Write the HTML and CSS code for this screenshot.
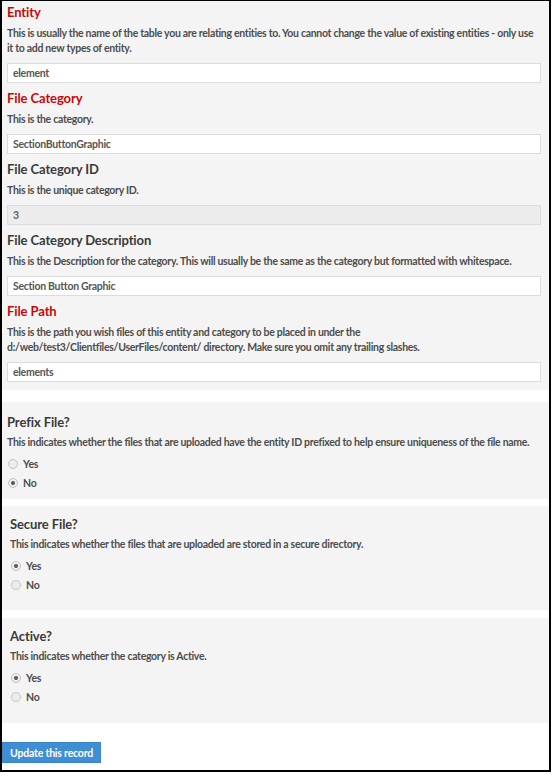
FILE: index.html
```html
<!DOCTYPE html>
<html lang="en">
<head>
<meta charset="UTF-8">
<title>Edit File Category</title>
<link rel="stylesheet" href="styles.css">
</head>
<body>
    <div class="frame">
        <div class="panel fields">
            <div class="field">
                <label class="field-title required" for="entity">Entity</label>
                <p class="field-help">This is usually the name of the table you are relating entities to. You cannot change the value of existing entities - only use it to add new types of entity.</p>
                <input type="text" id="entity" value="element">
            </div>
            <div class="field">
                <label class="field-title required" for="category">File Category</label>
                <p class="field-help">This is the category.</p>
                <input type="text" id="category" value="SectionButtonGraphic">
            </div>
            <div class="field">
                <label class="field-title" for="categoryId">File Category ID</label>
                <p class="field-help">This is the unique category ID.</p>
                <input type="text" id="categoryId" value="3" disabled>
            </div>
            <div class="field">
                <label class="field-title" for="description">File Category Description</label>
                <p class="field-help">This is the Description for the category. This will usually be the same as the category but formatted with whitespace.</p>
                <input type="text" id="description" value="Section Button Graphic">
            </div>
            <div class="field">
                <label class="field-title required" for="path">File Path</label>
                <p class="field-help">This is the path you wish files of this entity and category to be placed in under the d:/web/test3/Clientfiles/UserFiles/content/ directory. Make sure you omit any trailing slashes.</p>
                <input type="text" id="path" value="elements">
            </div>
        </div>

        <div class="panel option prefix">
            <div class="field-title">Prefix File?</div>
            <p class="field-help">This indicates whether the files that are uploaded have the entity ID prefixed to help ensure uniqueness of the file name.</p>
            <label class="radio"><input type="radio" name="prefix" value="1"> Yes</label>
            <label class="radio"><input type="radio" name="prefix" value="0" checked> No</label>
        </div>

        <div class="panel option secure">
            <div class="field-title">Secure File?</div>
            <p class="field-help">This indicates whether the files that are uploaded are stored in a secure directory.</p>
            <label class="radio"><input type="radio" name="secure" value="1" checked> Yes</label>
            <label class="radio"><input type="radio" name="secure" value="0"> No</label>
        </div>

        <div class="panel option active">
            <div class="field-title">Active?</div>
            <p class="field-help">This indicates whether the category is Active.</p>
            <label class="radio"><input type="radio" name="active" value="1" checked> Yes</label>
            <label class="radio"><input type="radio" name="active" value="0"> No</label>
        </div>

        <button class="btn-update">Update this record</button>
    </div>
</body>
</html>
```

FILE: styles.css
```css
* {
    box-sizing: border-box;
}
body {
    margin: 0;
    font-family: Lato, "Open Sans", sans-serif;
    color: #4a4a4a;
    background-color: #fff;
}
.frame {
    width: 551px;
    height: 772px;
    border: 2px solid #000;
    border-top-width: 1px;
    background-color: #fff;
}
.panel {
    background-color: #f4f4f4;
}
.fields {
    padding: 2px 8px 8px 5px;
}
.field {
    margin-top: 6px;
}
.field:first-child {
    margin-top: 0;
}
.field-title {
    display: block;
    font-size: 13px;
    line-height: 18px;
    font-weight: bold;
    letter-spacing: -0.1px;
    color: #3a3a3a;
}
.field-title.required {
    color: #c80808;
}
.field-help {
    margin: 5px 0 0;
    font-size: 10.5px;
    line-height: 15px;
    font-weight: bold;
    letter-spacing: -0.3px;
    color: #4d4d4d;
}
.field input[type="text"] {
    display: block;
    width: 100%;
    height: 20px;
    margin-top: 7px;
    padding: 0 5px;
    font-family: inherit;
    font-size: 10.5px;
    font-weight: bold;
    letter-spacing: -0.3px;
    color: #555;
    background-color: #fff;
    border: 1px solid #dcdcdc;
    outline: none;
}
.field input[disabled] {
    background-color: #ececec;
    color: #666;
}
.option {
    padding-left: 5px;
    padding-right: 5px;
}
.option .field-help {
    margin-top: 4px;
}
.prefix {
    margin-top: 12px;
    padding-top: 11px;
    padding-bottom: 7px;
}
.secure {
    margin-top: 7px;
    padding-top: 9px;
    padding-bottom: 16px;
    padding-left: 8px;
}
.active {
    margin-top: 8px;
    padding-top: 9px;
    padding-bottom: 17px;
    padding-left: 8px;
}
.radio {
    display: flex;
    align-items: center;
    gap: 5px;
    height: 19px;
    font-size: 10.5px;
    font-weight: bold;
    letter-spacing: -0.2px;
    color: #4d4d4d;
}
.radio:first-of-type {
    margin-top: 4px;
}
.radio input {
    appearance: none;
    -webkit-appearance: none;
    width: 10px;
    height: 10px;
    margin: 0 0 0 1px;
    border: 1px solid #c4c4c4;
    border-radius: 50%;
    background-color: #ededed;
    display: grid;
    place-items: center;
}
.radio input:checked::after {
    content: "";
    width: 4px;
    height: 4px;
    border-radius: 50%;
    background-color: #555;
}
.btn-update {
    display: block;
    margin-top: 19px;
    height: 21px;
    padding: 0 7px;
    font-family: inherit;
    font-size: 10.5px;
    font-weight: bold;
    letter-spacing: -0.2px;
    color: #fff;
    background-color: #3f8dd3;
    border: 1px solid #3a86ca;
    cursor: pointer;
}
```
